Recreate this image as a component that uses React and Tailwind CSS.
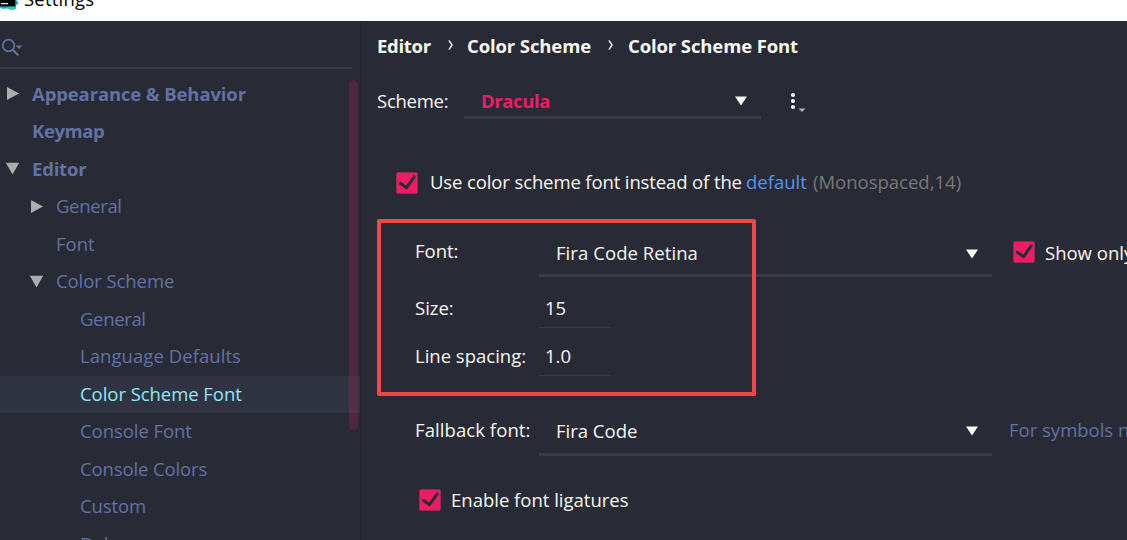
const tree = [
  { label: 'Appearance & Behavior', arrow: 'right', pad: 'pl-[7px]', bold: true, track: 'tracking-[-0.13px]' },
  { label: 'Keymap', pad: 'pl-[7px]', bold: true, track: 'tracking-[-0.4px]' },
  { label: 'Editor', arrow: 'down', pad: 'pl-[7px]', bold: true, track: 'tracking-[-0.2px]' },
  { label: 'General', arrow: 'right', pad: 'pl-[31px]', track: 'tracking-[-0.35px]' },
  { label: 'Font', pad: 'pl-[31px]', track: 'tracking-[0px]' },
  { label: 'Color Scheme', arrow: 'down', pad: 'pl-[31px]', track: 'tracking-[-0.08px]' },
  { label: 'General', pad: 'pl-[55px]', track: 'tracking-[-0.35px]' },
  { label: 'Language Defaults', pad: 'pl-[55px]', track: 'tracking-[0.06px]' },
  { label: 'Color Scheme Font', pad: 'pl-[55px]', selected: true, track: 'tracking-[-0.05px]' },
  { label: 'Console Font', pad: 'pl-[55px]', track: 'tracking-[-0.06px]' },
  { label: 'Console Colors', pad: 'pl-[55px]', track: 'tracking-[-0.12px]' },
  { label: 'Custom', pad: 'pl-[55px]', track: 'tracking-[-0.1px]' },
  { label: 'Debugger', pad: 'pl-[55px]', track: 'tracking-[0px]' },
]

function TreeArrow({ dir }) {
  return (
    <span className="flex w-[25px] shrink-0">
      {dir && (
        <svg width="13" height="13" viewBox="0 0 13 13" fill="#adadad" overflow="visible">
          {dir === 'right' ? <path d="M0 0L12 6.5L0 13Z" /> : <path d="M-1.2 .8H12.2L5.5 12.6Z" />}
        </svg>
      )}
    </span>
  )
}

function TreeRow({ item }) {
  const color = item.selected ? 'bg-[#303341] text-[#8be9fd]' : 'text-[#6272a4]'
  const weight = item.bold ? 'font-bold' : 'font-normal'
  return (
    <div className={`flex h-[37.5px] shrink-0 items-center whitespace-nowrap pb-px ${item.pad} ${color} ${weight} ${item.track}`}>
      <TreeArrow dir={item.arrow} />
      <span>{item.label}</span>
    </div>
  )
}

function Caret() {
  return (
    <svg width="12" height="10" viewBox="0 0 12 10" fill="#f8f8f2" className="mr-[14px] shrink-0">
      <path d="M0 .5H12L6 9.5Z" />
    </svg>
  )
}

function Checkbox() {
  return (
    <svg width="22" height="22" viewBox="0 0 22 22" className="shrink-0">
      <rect x=".5" y=".5" width="21" height="21" rx="1.5" fill="#ee1c62" stroke="#9c3058" strokeWidth=".6" />
      <path d="M4.3 11.2L10.6 15.7L18.2 4.8" fill="none" stroke="#282a36" strokeWidth="2.9" strokeLinecap="round" strokeLinejoin="round" />
    </svg>
  )
}

function Chevron() {
  return (
    <svg width="6" height="12" viewBox="0 0 6 12" fill="none" stroke="#f8f8f2" strokeWidth="1.4" className="mb-[2px]">
      <path d="M1 1.4L4 6L1 10.6" />
    </svg>
  )
}

export default function App() {
  return (
    <div className="flex h-[540px] w-[1127px] flex-col overflow-hidden bg-[#282a36] font-['Open_Sans','Noto_Sans',sans-serif] text-[18.5px] leading-[26px] text-[#f8f8f2]">
      <header className="flex h-[21px] shrink-0 items-end bg-white text-black">
        <svg width="20" height="21" viewBox="0 0 20 21">
          <path d="M0 0H16.5L18.6 3.5L15.8 5.5L15.8 9L11 10L7 8.2L3 9L0 7.5Z" fill="#12a9e8" />
          <path d="M6 8L10 6L16 6L13.5 9L11 10Z" fill="#21d7a9" />
          <rect width="15.3" height="6.4" fill="#000" />
          <rect x="1" y="3" width="7" height="1.2" fill="#fff" />
        </svg>
        <span className="mb-[9px] ml-[4px] tracking-[0.2px]">Settings</span>
      </header>
      <div className="flex min-h-0 flex-1">
        <aside className="relative flex w-[360px] shrink-0 flex-col overflow-hidden">
          <div className="mr-[8px] flex h-[48px] shrink-0 items-center border-b-2 border-[#373948] pl-[1px] pt-[6px]">
            <svg width="22" height="19" viewBox="0 0 22 19" fill="none" stroke="#6272a4">
              <circle cx="7.5" cy="7.5" r="5.8" strokeWidth="1.7" />
              <path d="M11.8 11.8L17.4 17.4" strokeWidth="2.1" />
              <path d="M14.5 7.5H21.5L18 11Z" fill="#6272a4" stroke="none" />
            </svg>
          </div>
          <nav className="flex flex-col pt-[6.5px]">
            {tree.map((item, i) => <TreeRow key={i} item={item} />)}
          </nav>
          <div className="absolute left-[348.5px] top-[59px] h-[350px] w-[9px] rounded-full bg-[#ee1c62]/20" />
        </aside>
        <div className="w-[2px] shrink-0 bg-[#232530]" />
        <main className="relative flex min-w-0 flex-1 flex-col overflow-hidden whitespace-nowrap pl-[15px]">
          <div className="flex h-[51px] shrink-0 items-center pb-[2px] font-bold tracking-[-0.12px]">
            <span className="w-[71px] tracking-[-0.3px]">Editor</span>
            <Chevron />
            <span className="ml-[13px] w-[141px]">Color Scheme</span>
            <Chevron />
            <span className="ml-[14px]">Color Scheme Font</span>
          </div>
          <div className="mt-[11px] flex h-[36px] shrink-0 items-center">
            <span className="w-[87px] tracking-[-0.25px]">Scheme:</span>
            <div className="flex h-[36px] w-[297px] items-center justify-between border-b-[3px] border-[#383a4a] pl-[17px] pt-[2px]">
              <span className="font-bold tracking-[-0.4px] text-[#ee1c62]">Dracula</span>
              <Caret />
            </div>
            <svg width="17" height="20" viewBox="0 0 17 20" className="ml-[29px] mt-[2px]">
              <g fill="#f8f8f2">
                <circle cx="3" cy="3" r="2.1" />
                <circle cx="3" cy="9" r="2.1" />
                <circle cx="3" cy="15" r="2.1" />
              </g>
              <path d="M8.5 16.5H15.5L12 20Z" fill="#adb1bd" />
            </svg>
          </div>
          <div className="mt-[53px] flex h-[22px] shrink-0 items-center pl-[19px]">
            <Checkbox />
            <span className="mb-[2px] ml-[12px] w-[316px] shrink-0 tracking-[-0.12px]">Use color scheme font instead of the</span>
            <span className="mb-[2px] w-[67px] shrink-0 text-[#5394f3]">default</span>
            <span className="mb-[2px] text-[#787878]">(Monospaced,14)</span>
          </div>
          <div className="mt-[39px] flex h-[44px] shrink-0 items-center pl-[38px]">
            <span className="mb-[8px] w-[124px] shrink-0">Font:</span>
            <div className="flex h-[44px] w-[453px] shrink-0 items-center justify-between border-b-[3px] border-[#383a4a] pl-[17px]">
              <span className="mb-[2px] tracking-[0.07px]">Fira Code Retina</span>
              <Caret />
            </div>
            <div className="mb-[6px] ml-[21px] flex items-center gap-[10px]">
              <Checkbox />
              <span className="mt-[2px]">Show only monospaced fonts</span>
            </div>
          </div>
          <div className="mt-[11px] flex h-[40px] shrink-0 items-center pl-[38px]">
            <span className="w-[124px] shrink-0">Size:</span>
            <span className="flex h-[40px] w-[72px] items-center border-b border-[#383a4a] pl-[6px]">15</span>
          </div>
          <div className="mt-[8px] flex h-[40px] shrink-0 items-center pl-[38px]">
            <span className="w-[124px] shrink-0">Line spacing:</span>
            <span className="flex h-[40px] w-[72px] items-center border-b border-[#383a4a] pl-[6px]">1.0</span>
          </div>
          <div className="mt-[36px] flex h-[44px] shrink-0 items-center pl-[38px]">
            <span className="mb-[9px] w-[124px] shrink-0 tracking-[0.08px]">Fallback font:</span>
            <div className="flex h-[44px] w-[453px] shrink-0 items-center justify-between border-b-[3px] border-[#383a4a] pb-[3px] pl-[17px]">
              <span>Fira Code</span>
              <Caret />
            </div>
            <span className="mb-[9px] ml-[17px] text-[#6272a4]">For symbols not supported</span>
          </div>
          <div className="mt-[33px] flex h-[22px] shrink-0 items-center pl-[42px]">
            <Checkbox />
            <span className="ml-[10px]">Enable font ligatures</span>
          </div>
          <div className="absolute left-[14.5px] top-[197.5px] h-[177px] w-[379px] rounded-[2px] border-4 border-[#ee4848]" />
        </main>
      </div>
    </div>
  )
}
